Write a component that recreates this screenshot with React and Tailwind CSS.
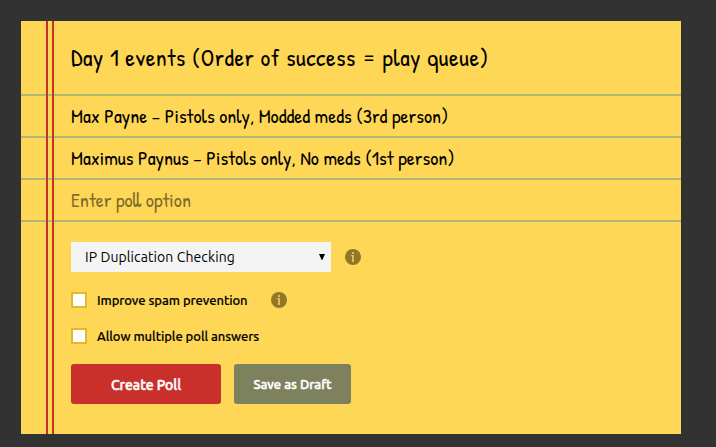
import React, { useState } from "react";

const handFont =
  "font-['Patrick_Hand','Liberation_Sans_Narrow','Open_Sans',sans-serif]";
const uiFont = "font-['Ubuntu','Noto_Sans',sans-serif]";

/* ==================== INFO ICON ==================== */
const InfoIcon = ({ className }) => (
  <svg viewBox="0 0 16 16" className={`w-4 h-4 shrink-0 ${className}`}>
    <circle cx="8" cy="8" r="8" fill="#927729" />
    <path d="M7 3h2v2H7zM6 6h3v7H7V7H6z" fill="#e3bd4b" />
  </svg>
);

/* ==================== CHECKBOX ==================== */
const Checkbox = ({ label, checked, onChange }) => (
  <label className="flex items-center h-4 cursor-pointer">
    <input
      type="checkbox"
      checked={checked}
      onChange={onChange}
      className="appearance-none w-4 h-4 shrink-0 bg-white border-2 border-[#e5b829] checked:bg-[#c9302c]"
    />
    <span className="ml-2.5 pt-0.5 whitespace-nowrap text-[13px] font-medium tracking-[-0.06px] text-black [-webkit-text-stroke:0.15px]">
      {label}
    </span>
  </label>
);

const rows = [
  {
    text: "Max Payne – Pistols only, Modded meds (3rd person)",
    style: "text-black",
  },
  {
    text: "Maximus Paynus – Pistols only, No meds (1st person)",
    style: "text-black",
  },
  { text: "Enter poll option", style: "text-[#7f6b2b]" },
];

/* ==================== POLL FORM ==================== */
export default function App() {
  const [spam, setSpam] = useState(false);
  const [multiple, setMultiple] = useState(false);

  return (
    <div className={`h-screen overflow-hidden bg-[#323232] pt-[21px] pl-[21px] ${uiFont}`}>
      <div className="relative w-[660px] h-[413px] bg-[#ffd756]">
        {/* Ruled lines */}
        <div className={handFont}>
          <h1 className="h-[75px] border-b-2 border-[#b0b878] pl-[50px] pb-0.5 flex items-center text-[24px] tracking-[0.6px] text-black whitespace-nowrap">
            <span>Day 1 events (Order of success = play queue)</span>
          </h1>
          {rows.map((row) => (
            <div
              key={row.text}
              className={`h-[42px] border-b-2 border-[#b0b878] pl-[50px] flex items-center text-[20px] whitespace-nowrap ${row.style}`}
            >
              <span>{row.text}</span>
            </div>
          ))}
        </div>

        {/* Margin */}
        <div className="absolute inset-y-0 left-[25px] w-2 border-x-2 border-[#c9302c]" />

        {/* Options */}
        <div className="pl-[50px] pt-5">
          <div className="flex items-center">
            <button className="w-[260px] h-[30px] bg-[#f4f4f4] pl-3.5 pr-1.5 flex items-center justify-between text-sm tracking-[0.1px] text-black">
              <span>IP Duplication Checking</span>
              <svg viewBox="0 0 6 6" className="w-1.5 h-1.5">
                <path d="M0 0h6L3.3 6h-.6z" />
              </svg>
            </button>
            <InfoIcon className="ml-3.5" />
          </div>

          <div className="mt-5 flex items-center">
            <Checkbox
              label="Improve spam prevention"
              checked={spam}
              onChange={() => setSpam(!spam)}
            />
            <InfoIcon className="ml-[23.4px]" />
          </div>

          <div className="mt-5">
            <Checkbox
              label="Allow multiple poll answers"
              checked={multiple}
              onChange={() => setMultiple(!multiple)}
            />
          </div>

          {/* Buttons */}
          <div className="mt-5 flex gap-[13px] text-white font-medium whitespace-nowrap [-webkit-text-stroke:0.5px]">
            <button className="w-[150px] h-10 pt-0.5 rounded-[3px] bg-[#c9302c] text-sm tracking-[-0.05px]">
              Create Poll
            </button>
            <button className="w-[117px] h-10 pt-0.5 rounded-[3px] bg-[#7e815d] text-[13px]">
              Save as Draft
            </button>
          </div>
        </div>
      </div>
    </div>
  );
}
